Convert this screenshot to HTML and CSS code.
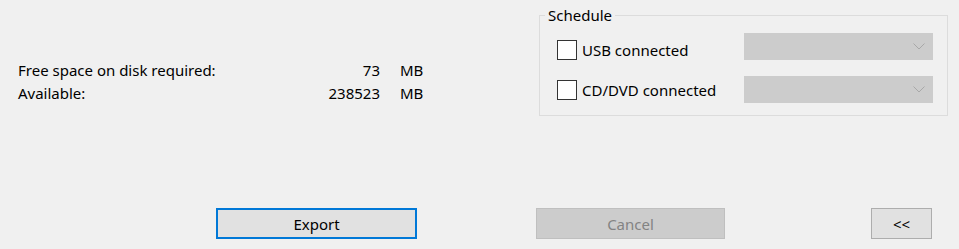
FILE: index.html
```html
<!DOCTYPE html>
<html lang="en">
<head>
    <meta charset="UTF-8">
    <title>Export</title>
    <link rel="stylesheet" href="styles.css">
</head>
<body>
    <div class="dialog">
        <div class="top-area">
            <div class="disk-info">
                <span class="label">Free space on disk required:</span>
                <span class="value">73</span>
                <span class="unit">MB</span>
                <span class="label">Available:</span>
                <span class="value">238523</span>
                <span class="unit">MB</span>
            </div>

            <fieldset class="schedule">
                <legend>Schedule</legend>
                <div class="schedule-row">
                    <label class="check check-low"><span class="box"></span>USB connected</label>
                    <div class="combo disabled">
                        <svg width="12" height="7" viewBox="0 0 12 7"><polyline points="0.5,0.5 6,6 11.5,0.5" fill="none" stroke="#a8a8a8" stroke-width="1"/></svg>
                    </div>
                </div>
                <div class="schedule-row">
                    <label class="check"><span class="box"></span>CD/DVD connected</label>
                    <div class="combo disabled">
                        <svg width="12" height="7" viewBox="0 0 12 7"><polyline points="0.5,0.5 6,6 11.5,0.5" fill="none" stroke="#a8a8a8" stroke-width="1"/></svg>
                    </div>
                </div>
            </fieldset>
        </div>

        <div class="button-row">
            <button class="btn btn-default btn-export">Export</button>
            <button class="btn btn-disabled btn-cancel" disabled>Cancel</button>
            <button class="btn btn-less">&lt;&lt;</button>
        </div>
    </div>
</body>
</html>
```

FILE: styles.css
```css
body {
    margin: 0;
    background-color: #f0f0f0;
    font-family: 'Noto Sans', 'Open Sans', sans-serif;
    font-size: 15px;
    color: #000000;
}
.dialog {
    width: 959px;
    height: 249px;
}
.top-area {
    display: flex;
    height: 208px;
}
.disk-info {
    width: 521px;
    padding: 59px 0 0 18px;
    display: grid;
    grid-template-columns: 250px 112px auto;
    grid-auto-rows: 23px;
    align-content: start;
    line-height: 23px;
}
.disk-info .value {
    text-align: right;
}
.disk-info .unit {
    padding-left: 20px;
}
.schedule {
    margin: 5px 0 0 0;
    padding: 8px 14px 15px 0;
    width: 393px;
    height: 86px;
    border: 1px solid #dcdcdc;
    display: flex;
    flex-direction: column;
    gap: 16px;
}
.schedule legend {
    padding: 0 3px;
    margin-left: 5px;
    line-height: 20px;
}
.schedule-row {
    display: flex;
    align-items: center;
    justify-content: space-between;
    height: 27px;
    padding-left: 17px;
}
.check {
    display: flex;
    align-items: center;
    gap: 5px;
}
.check-low {
    margin-top: 6px;
}
.box {
    width: 18px;
    height: 18px;
    border: 1px solid #333333;
    background-color: #ffffff;
}
.combo {
    width: 189px;
    height: 27px;
    box-sizing: border-box;
    background-color: #cccccc;
    border: 1px solid #cccccc;
    display: flex;
    align-items: center;
    justify-content: flex-end;
    padding-right: 7px;
}
.button-row {
    display: flex;
    padding-left: 216px;
}
.btn {
    height: 31px;
    box-sizing: border-box;
    font-family: inherit;
    font-size: 15px;
    background-color: #e1e1e1;
    border: 1px solid #adadad;
    color: #000000;
    padding: 0;
}
.btn-export {
    width: 201px;
    border: 2px solid #0078d7;
}
.btn-cancel {
    width: 189px;
    margin-left: 119px;
    background-color: #cccccc;
    border-color: #bfbfbf;
    color: #838383;
}
.btn-less {
    width: 61px;
    margin-left: 146px;
}
```
